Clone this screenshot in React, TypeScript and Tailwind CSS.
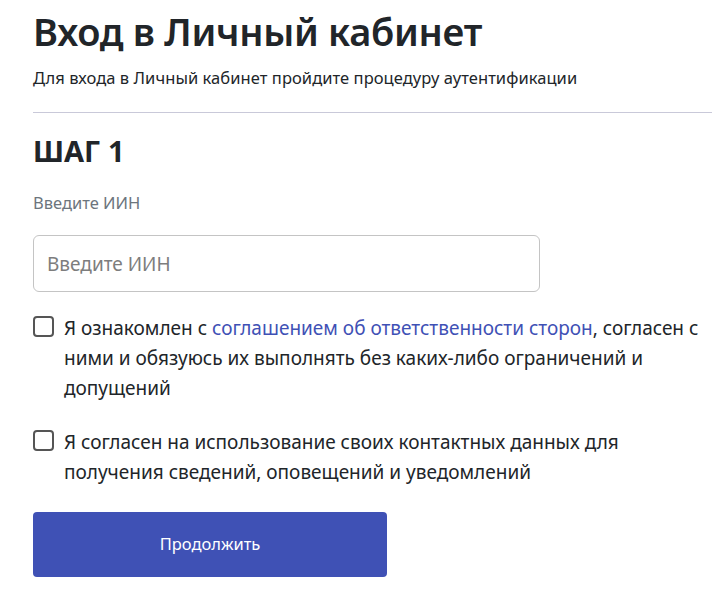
import React from "react";

export default function App() {
  return (
    <div
      className="min-h-[603px] w-[712px] bg-white pl-[33px] text-[#212529]"
      style={{ fontFamily: '"Noto Sans", "Open Sans", sans-serif' }}
    >
      <h1 className="pt-[8px] text-[38px] leading-[46px] font-semibold tracking-[-0.3px]">
        Вход в Личный кабинет
      </h1>
      <p className="mt-[13px] text-[16.5px] leading-[22px] tracking-[0.06px]">
        Для входа в Личный кабинет пройдите процедуру аутентификации
      </p>
      <div className="mt-[23px] h-px bg-[#c9c9d9]" />
      <h2 className="mt-[20px] text-[29px] leading-[36px] font-bold">ШАГ 1</h2>
      <div className="mt-[23px] text-[16.5px] leading-[22px] text-[#6c757d]">Введите ИИН</div>
      <input
        type="text"
        placeholder="Введите ИИН"
        className="mt-[21px] block h-[57px] w-[507px] rounded-[6px] border border-[#c4c4c4] px-[13px] text-[19px] text-[#212529] outline-none placeholder:text-[#7d7d7d]"
      />
      <div className="mt-[21px] flex items-start gap-[10px] pr-[12px]">
        <span className="mt-[3px] h-[21px] w-[21px] shrink-0 rounded-[4px] border-2 border-[#555]" />
        <p className="text-[19px] leading-[30px]">
          Я ознакомлен с{" "}
          <a className="text-[#3f51b5]">соглашением об ответственности сторон</a>, согласен с
          ними и обязуюсь их выполнять без каких-либо ограничений и допущений
        </p>
      </div>
      <div className="mt-[24px] flex items-start gap-[10px] pr-[12px]">
        <span className="mt-[3px] h-[21px] w-[21px] shrink-0 rounded-[4px] border-2 border-[#555]" />
        <p className="text-[19px] leading-[30px]">
          Я согласен на использование своих контактных данных для получения сведений, оповещений и
          уведомлений
        </p>
      </div>
      <button className="mt-[25px] flex h-[65px] w-[354px] items-center justify-center rounded-[4px] bg-[#3f51b5] text-[16.5px] text-white">
        Продолжить
      </button>
    </div>
  );
}
